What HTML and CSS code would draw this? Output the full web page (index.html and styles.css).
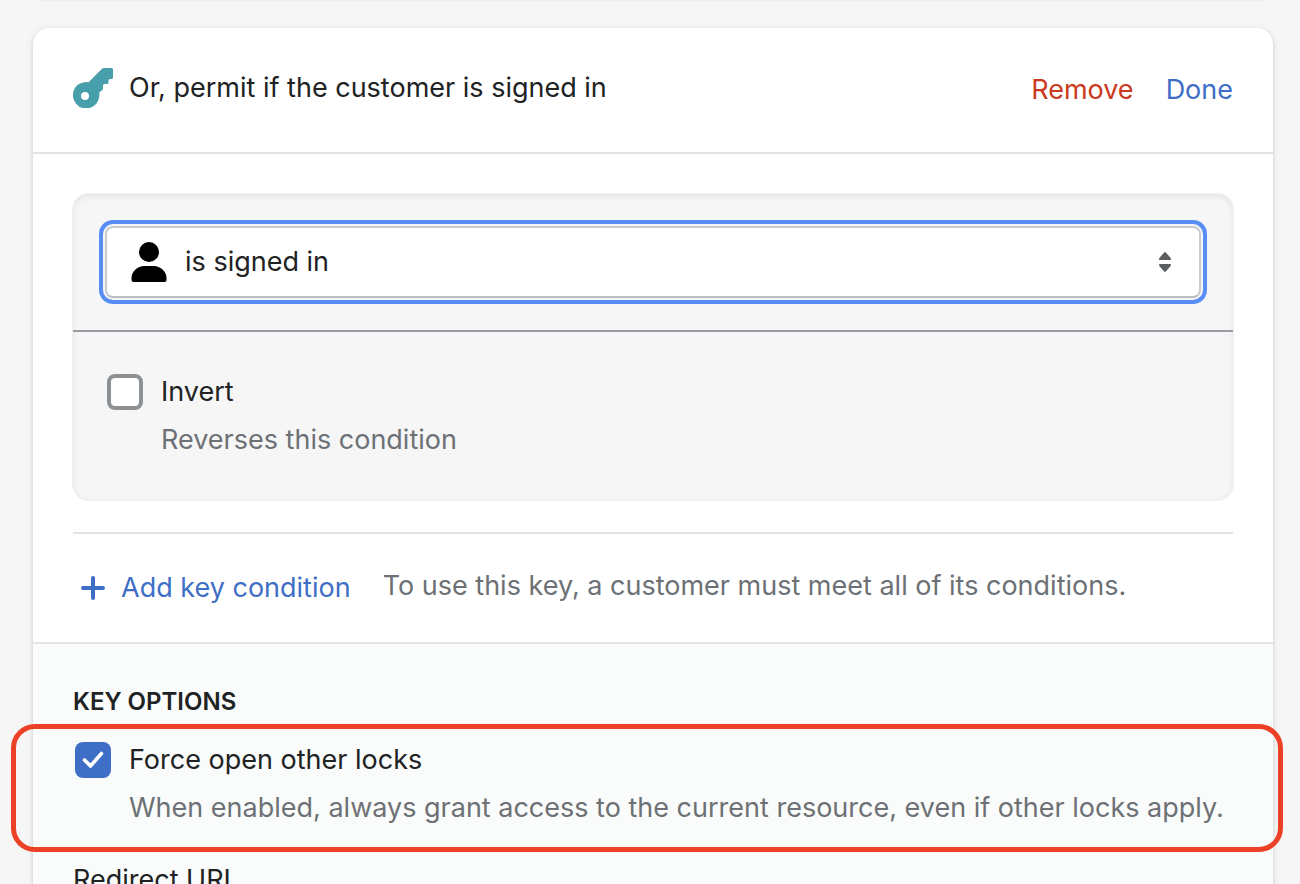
FILE: index.html
```html
<!DOCTYPE html>
<html lang="en">
<head>
<meta charset="utf-8">
<title>Key settings</title>
<link rel="stylesheet" href="styles.css">
</head>
<body>
<main class="page">
  <div class="previous-card"></div>
  <section class="card">
    <header class="card-header">
      <svg class="key-icon" viewBox="0 0 40 40" aria-hidden="true">
        <path fill="#479fab" fill-rule="evenodd" d="M28.500 1.200Q29.700 0 31.500 0H38.500Q40 0 40 1.500V9.500Q40 11 38.500 11H37Q35.500 11 35.500 12.500V14.500Q35.500 16 34 16H31.500Q30 16 30 17.500V20.500Q30 22 28.500 22.800L26.500 24Q26.500 25.500 26.300 27A13.200 13.200 0 1 1 15.500 14.200ZM12 24a4 4 0 1 0 0 8a4 4 0 0 0 0-8Z"/>
      </svg>
      <h2 class="card-title">Or, permit if the customer is signed in</h2>
      <div class="actions">
        <button class="link danger" type="button">Remove</button>
        <button class="link" type="button">Done</button>
      </div>
    </header>
    <div class="card-body">
      <div class="panel">
        <div class="select-row">
          <div class="select-wrap">
            <select class="select" aria-label="Condition"><option>is signed in</option></select>
            <svg class="person-icon" viewBox="0 0 36 40" aria-hidden="true">
              <circle cx="18" cy="10" r="10"/>
              <path d="M0.500 36C0.500 29 7 24 13 24H23C29 24 35.500 29 35.500 36V38Q35.500 40 33.500 40H2.500Q0.500 40 0.500 38Z"/>
            </svg>
            <svg class="arrows-icon" viewBox="0 0 12 20" aria-hidden="true">
              <path fill="#5c5f62" d="M5.200 0.400Q6 -0.400 6.800 0.400L11.700 6Q12.500 8 11 8H1Q-0.500 8 0.300 6ZM5.200 19.600Q6 20.400 6.800 19.600L11.700 14Q12.500 12 11 12H1Q-0.500 12 0.300 14Z"/>
            </svg>
          </div>
        </div>
        <div class="invert-row">
          <div class="choice">
            <input class="checkbox" type="checkbox" id="invert" aria-describedby="invert-help">
            <div class="choice-text">
              <label for="invert">Invert</label>
              <p class="help" id="invert-help">Reverses this condition</p>
            </div>
          </div>
        </div>
      </div>
      <div class="add-row">
        <button class="link add" type="button">
          <svg class="plus-icon" viewBox="0 0 24 24" aria-hidden="true">
            <path d="M12 2V22M2 12H22" stroke="currentColor" stroke-width="4" stroke-linecap="round"/>
          </svg>
          Add key condition
        </button>
        <p class="help">To use this key, a customer must meet all of its conditions.</p>
      </div>
    </div>
    <div class="options">
      <h3 class="options-title">KEY OPTIONS</h3>
      <div class="highlight">
        <div class="choice">
          <input class="checkbox" type="checkbox" id="force" checked aria-describedby="force-help">
          <div class="choice-text">
            <label for="force">Force open other locks</label>
            <p class="help" id="force-help">When enabled, always grant access to the current resource, even if other locks apply.</p>
          </div>
        </div>
      </div>
      <div class="field">
        <label for="redirect">Redirect URL</label>
        <input class="text-input" type="url" id="redirect">
      </div>
    </div>
  </section>
</main>
</body>
</html>
```
FILE: styles.css
```css
* {
  box-sizing: border-box;
}

html {
  overflow: hidden;
}

body {
  margin: 0;
  background: #f6f6f6;
  color: #202223;
  font-family: Inter, "Liberation Sans", sans-serif;
  font-size: 27px;
  line-height: 40px;
}

h2,
h3,
p {
  margin: 0;
  font-weight: 400;
  font-size: 27px;
}

button,
select,
input {
  font: inherit;
  color: inherit;
}

.page {
  height: 100vh;
  padding: 0 27px 0 33px;
}

.previous-card {
  height: 28px;
  margin: 0 8px;
  box-shadow: inset 0 1px 1px #eeeeef;
}

.card {
  background: #fff;
  border-radius: 16px;
  box-shadow: 0 0 10px rgba(23, 24, 24, 0.05), 0 2px 4px rgba(0, 0, 0, 0.15);
}

.card-header {
  display: flex;
  align-items: flex-start;
  gap: 16px;
  padding: 40px 40px 42px;
  border-bottom: 2px solid #e1e3e5;
}

.key-icon {
  width: 40px;
  height: 40px;
}

.card-title {
  flex: 1;
}

.actions {
  display: flex;
  gap: 32px;
  padding-top: 2px;
}

.link {
  padding: 0;
  border: 0;
  background: none;
  color: #3f6ec6;
  cursor: pointer;
}

.danger {
  color: #ca3a20;
}

.card-body {
  padding: 40px 40px 34px;
}

.panel {
  border-radius: 16px;
  background: #f6f6f7;
  box-shadow: 0 0 0 1px #f0f0f1, inset 0 2px 6px rgba(0, 0, 0, 0.08);
}

.select-row {
  padding: 32px;
  border-bottom: 2px solid #999ea4;
}

.select-wrap {
  position: relative;
}

.select {
  display: block;
  width: 100%;
  height: 72px;
  padding: 0 78px;
  border: 2px solid #c9cccf;
  border-bottom-color: #babfc3;
  border-radius: 8px;
  appearance: none;
  background: #fff;
  box-shadow: 0 0 0 2px #f5f5f6, 0 0 0 6px #588df6;
}

.person-icon,
.arrows-icon {
  position: absolute;
  pointer-events: none;
}

.person-icon {
  top: 16px;
  left: 26px;
  width: 36px;
  height: 40px;
}

.arrows-icon {
  top: 26px;
  right: 30px;
  width: 12px;
  height: 20px;
}

.invert-row {
  padding: 40px 34px;
}

.choice {
  display: flex;
  gap: 18px;
}

.choice-text {
  display: grid;
  gap: 8px;
}

.checkbox {
  flex: none;
  width: 36px;
  height: 36px;
  margin: 2px 0;
  border: 4px solid #8c9196;
  border-radius: 8px;
  appearance: none;
  background: #fff;
}

.checkbox:checked {
  border: 0;
  background: #3f6ec6 url("data:image/svg+xml,%3Csvg xmlns='http://www.w3.org/2000/svg' viewBox='0 0 36 36'%3E%3Cpath d='M9.500 18L15.500 24L26.500 11.500' fill='none' stroke='white' stroke-width='3.600' stroke-linecap='round' stroke-linejoin='round'/%3E%3C/svg%3E") center / 36px 36px no-repeat;
}

.help {
  color: #6d7175;
}

.add-row {
  display: flex;
  gap: 32px;
  margin-top: 32px;
  padding: 32px 8px 0;
  border-top: 2px solid #e1e3e5;
}

.add {
  display: flex;
  align-items: center;
  gap: 16px;
  margin-top: 2px;
  white-space: nowrap;
}

.plus-icon {
  width: 24px;
  height: 24px;
}

.options {
  padding: 40px;
  border-top: 2px solid #e1e3e5;
  background: #fafcfb;
}

.options-title {
  padding-bottom: 4px;
  font-size: 24px;
  font-weight: 600;
  line-height: 36px;
}

.highlight {
  margin: 0 -50px 0 -62px;
  padding: 11px 0 19px 59px;
  border: 5px solid #ec4127;
  border-radius: 24px;
}

.field {
  display: grid;
  gap: 8px;
  padding-top: 8px;
}

.text-input {
  width: 100%;
  height: 72px;
  border: 2px solid #c9cccf;
  border-radius: 8px;
}
```
